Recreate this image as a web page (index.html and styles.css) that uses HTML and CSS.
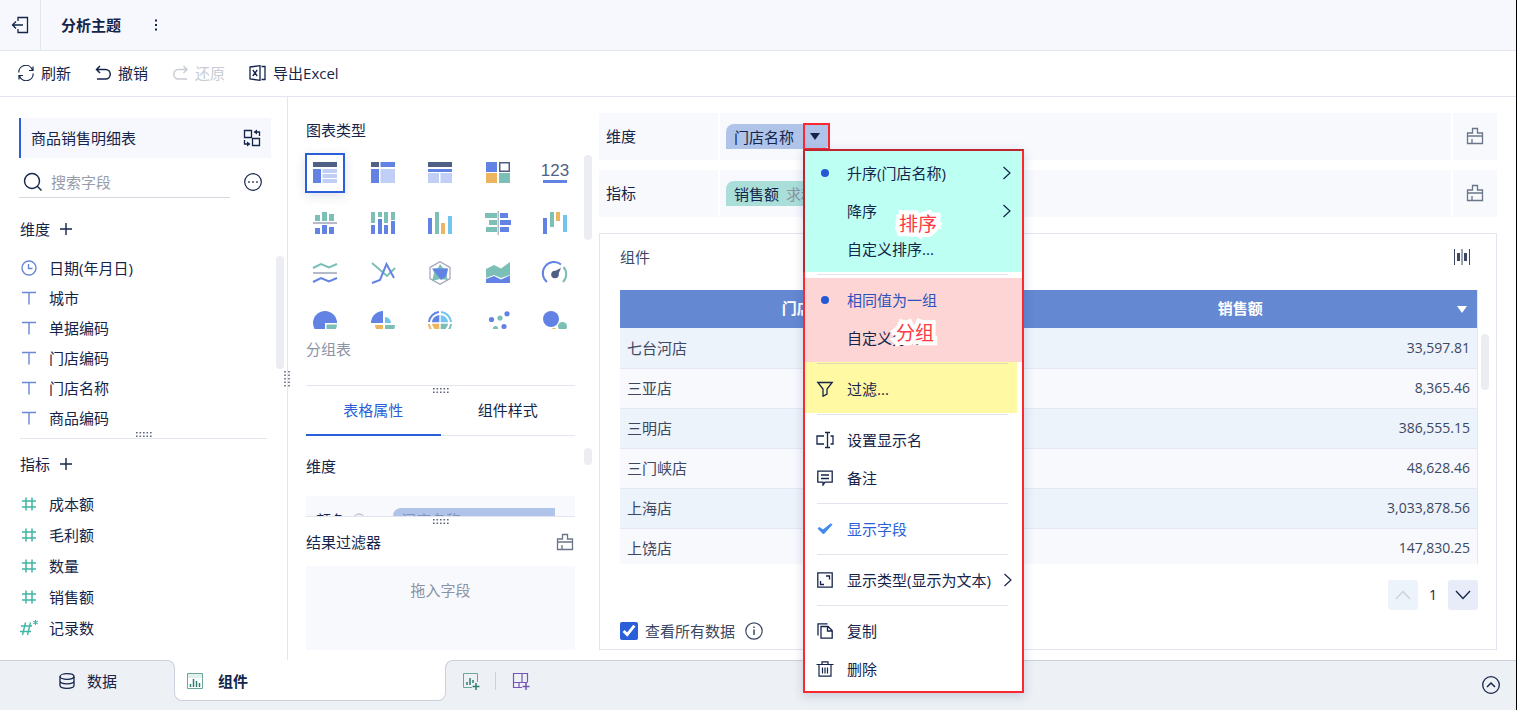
FILE: index.html
```html
<!DOCTYPE html>
<html lang="zh-CN">
<head>
<meta charset="UTF-8">
<meta name="viewport" content="width=device-width, initial-scale=1.0">
<title>分析主题</title>
<link rel="stylesheet" href="styles.css">
</head>
<body>
	<svg class="sprite" aria-hidden="true">
		<symbol id="i-text" viewBox="0 0 16 16"><path d="M1 2.5h14M8 2.5v12" stroke-width="1.4"/></symbol>
		<symbol id="i-hash" viewBox="0 0 16 16"><path d="M1 5h14M1 11h14M5 1.5v13M11 1.5v13" stroke-width="1.5"/></symbol>
		<symbol id="i-plus" viewBox="0 0 14 14"><path d="M7 1v12M1 7h12" stroke-width="1.4"/></symbol>
		<symbol id="i-right" viewBox="0 0 10 16"><path d="M1.5 2L8 8l-6.500 6" stroke-width="1.2"/></symbol>
		<symbol id="i-broom" viewBox="0 0 18 18"><path d="M1.5 6h5V1.500h5V6h5v10.500h-15zM1.500 9h15M6 12v4.500" stroke-width="1.3"/></symbol>
		<symbol id="i-dots" viewBox="0 0 16 5"><path d="M0 .8h16M0 4.200h16" stroke-width="1.6" stroke-dasharray="1.6 1.9"/></symbol>
	</svg>

	<header class="topbar">
		<button class="back" aria-label="返回">
			<svg width="18" height="18" viewBox="0 0 18 18"><path d="M7 5V1.500h9.500v15H7V13M12 9H1.500M5 5.500L1.500 9 5 12.500" stroke-width="1.3"/></svg>
		</button>
		<h1>分析主题</h1>
		<button class="more" aria-label="更多">
			<svg width="4" height="14" viewBox="0 0 4 14"><path class="fill" d="M1 1.500h2v2H1zM1 6h2v2H1zM1 10.500h2v2H1z"/></svg>
		</button>
	</header>

	<nav class="toolbar">
		<button>
			<svg width="16" height="16" viewBox="0 0 16 16"><path d="M.8 7.500A7 7 0 0 1 14.400 5M15 1.500V5.500h-4M15.200 8.500A7 7 0 0 1 1.600 11M1 14.500V10.500h4" stroke-width="1.2"/></svg>刷新
		</button>
		<button>
			<svg width="16" height="16" viewBox="0 0 16 16"><path d="M5 1L1.500 4.500 5 8M1.500 4.500H10.500a4.500 4.500 0 0 1 0 9.500H2" stroke-width="1.5"/></svg>撤销
		</button>
		<button disabled>
			<svg width="16" height="16" viewBox="0 0 16 16"><path d="M11.500 1l3.500 3.500L11.500 8M15 4.500H6.500a4.500 4.500 0 0 0 0 9.500H15" stroke-width="1.5"/></svg>还原
		</button>
		<button>
			<svg width="17" height="16" viewBox="0 0 17 16"><path d="M1 2l10-1.300v14.600L1 14zM12.500 1.500H16v13h-3.500M3.800 5l4.400 6M8.200 5l-4.400 6" stroke-width="1.3"/></svg>导出Excel
		</button>
	</nav>

	<main class="main">
		<aside class="fields">
			<div class="source">
				<span>商品销售明细表</span>
				<button aria-label="切换表">
					<svg width="18" height="18" viewBox="0 0 18 18"><path d="M1.500 1.500h7v7h-7zM9.500 9.500h7v7h-7zM16.500 7V3h-4.500M1.500 11v4H6" stroke-width="1.3"/><path class="fill" d="M10.500 3L14 .5v5zM7.500 15L4 12.500v5z"/></svg>
				</button>
			</div>
			<div class="search">
				<label class="search-box">
					<svg width="20" height="20" viewBox="0 0 20 20"><circle cx="9" cy="9" r="7.500" stroke-width="1.4"/><path d="M14.500 14.500L18.500 18.500" stroke-width="1.4"/></svg>
					<input type="text" aria-label="搜索字段" placeholder="搜索字段">
				</label>
				<button aria-label="更多选项">
					<svg width="18" height="18" viewBox="0 0 18 18"><circle cx="9" cy="9" r="8.300" stroke-width="1.2"/><path class="fill" d="M4.200 8.200h1.600v1.600H4.200zM8.200 8.200h1.600v1.600H8.200zM12.200 8.200h1.600v1.600h-1.600z"/></svg>
				</button>
			</div>

			<h2>维度 <button aria-label="添加维度"><svg width="14" height="14"><use href="#i-plus"/></svg></button></h2>
			<ul class="dims">
				<li><svg class="blue" width="16" height="16" viewBox="0 0 16 16"><circle cx="8" cy="8" r="7" stroke-width="1.4"/><path d="M7.500 4v4.500h4" stroke-width="1.4"/></svg>日期(年月日)</li>
				<li><svg class="blue" width="16" height="16"><use href="#i-text"/></svg>城市</li>
				<li><svg class="blue" width="16" height="16"><use href="#i-text"/></svg>单据编码</li>
				<li><svg class="blue" width="16" height="16"><use href="#i-text"/></svg>门店编码</li>
				<li><svg class="blue" width="16" height="16"><use href="#i-text"/></svg>门店名称</li>
				<li><svg class="blue" width="16" height="16"><use href="#i-text"/></svg>商品编码</li>
			</ul>
			<div class="splitter"><svg width="16" height="5"><use href="#i-dots"/></svg></div>
			<h2>指标 <button aria-label="添加指标"><svg width="14" height="14"><use href="#i-plus"/></svg></button></h2>
			<ul class="measures">
				<li><svg class="green" width="16" height="16"><use href="#i-hash"/></svg>成本额</li>
				<li><svg class="green" width="16" height="16"><use href="#i-hash"/></svg>毛利额</li>
				<li><svg class="green" width="16" height="16"><use href="#i-hash"/></svg>数量</li>
				<li><svg class="green" width="16" height="16"><use href="#i-hash"/></svg>销售额</li>
				<li><svg class="green" width="16" height="16" viewBox="0 0 16 16"><path d="M0 6h11M-1 11.500h11M4.500 2.500l-3 12.500M9.500 2.500l-3 12.500" stroke-width="1.4"/><path d="M14.500 0v5M12.300 1.200l4.400 2.600M16.700 1.200l-4.400 2.600" stroke-width="1.1"/></svg>记录数</li>
			</ul>
			<i class="bar bar-dims"></i>
			<svg class="grip" width="6" height="16" viewBox="0 0 6 16"><path d="M1 0v16M5 0v16" stroke-width="1.6" stroke-dasharray="1.6 1.9"/></svg>
		</aside>

		<section class="config">
			<h2>图表类型</h2>
			<div class="charts">
				<button class="active" aria-label="分组表"><svg viewBox="0 0 24 24"><path class="c-dark" d="M0 1h24v5H0z"/><path class="c-blue" d="M0 8h8v14H0z"/><path class="c-light" d="M9.500 8H24v4H9.500zM9.500 13H24v4H9.500zM9.500 18H24v4H9.500z"/></svg></button>
				<button aria-label="交叉表"><svg viewBox="0 0 24 24"><path class="c-dark" d="M0 1h8v5H0z"/><path class="c-blue" d="M9.500 1H24v5H9.500zM0 8h8v14H0z"/><path class="c-light" d="M9.500 8H24v14H9.500z"/></svg></button>
				<button aria-label="明细表"><svg viewBox="0 0 24 24"><path class="c-dark" d="M0 1h24v5H0z"/><path class="c-blue" d="M0 8h24v3H0z"/><path class="c-light" d="M0 12h11v10H0zM12.500 12H24v10H12.500z"/></svg></button>
				<button aria-label="颜色表格"><svg viewBox="0 0 24 24"><path class="c-blue" d="M0 1h11v10H0z"/><path class="c-dark" d="M13 1h11v10H13zm1.500 1.500v7h8v-7z" fill-rule="evenodd"/><path class="c-orange" d="M0 12h11v10H0z"/><path class="c-teal" d="M13 12h11v10H13z"/></svg></button>
				<button aria-label="KPI指标卡"><svg viewBox="0 0 24 24"><text x="12" y="15" text-anchor="middle">123</text><path class="c-blue" d="M0 19h24v3H0z"/></svg></button>

				<button aria-label="对比柱状图"><svg viewBox="0 0 24 24"><path class="c-teal" d="M2 4h5v6H2zM9 1h5v9H9zM16 3h5v7h-5z"/><path class="c-grey" d="M0 11h24v2H0z"/><path class="c-blue" d="M2 17h5v6H2zM9 14h5v9H9zM16 16h5v7h-5z"/></svg></button>
				<button aria-label="堆积柱状图"><svg viewBox="0 0 24 24"><path class="c-teal" d="M0 1h4v11H0zM7 1h4v5H7zM13 1h4v11h-4zM20 1h4v8h-4z"/><path class="c-blue" d="M0 14h4v9H0zM7 8h4v15H7zM13 14h4v9h-4zM20 10h4v13h-4z"/></svg></button>
				<button aria-label="分区柱形图"><svg viewBox="0 0 24 24"><path class="c-blue" d="M0 7h4v16H0z"/><path class="c-teal" d="M7 1h4v22H7z"/><path class="c-orange" d="M13 12h4v11h-4z"/><path class="c-sky" d="M20 5h4v18h-4z"/></svg></button>
				<button aria-label="对比条形图"><svg viewBox="0 0 24 24"><path class="c-teal" d="M-1 2h12v5H-1zM3 9h8v5H3zM0 16h11v5H0z"/><path class="c-grey" d="M11.500 0h1.500v24h-1.500z"/><path class="c-blue" d="M14 2h8v5h-8zM14 9h11v5H14zM14 16h9v5h-9z"/></svg></button>
				<button aria-label="瀑布图"><svg viewBox="0 0 24 24"><path class="c-blue" d="M0 7h4v16H0z"/><path class="c-teal" d="M7 1h4v15H7z"/><path class="c-orange" d="M13 1h4v9h-4z"/><path class="c-sky" d="M20 4h4v17h-4z"/></svg></button>

				<button aria-label="范围面积图"><svg viewBox="0 0 24 24"><path class="s-teal" d="M0 7l8-4 8 3.500L24 3"/><path class="c-grey" d="M0 11h24v2H0z"/><path class="s-blue" d="M0 21l8-4 8 3.500 8-3.500"/></svg></button>
				<button aria-label="折线图"><svg viewBox="0 0 24 24"><path class="s-teal" d="M1 2l15 13 8-8"/><path class="s-blue" d="M1 22l8-3L15.500 3 23 17"/></svg></button>
				<button aria-label="雷达图"><svg viewBox="0 0 24 24"><path class="s-grey" d="M12 .8l10 5.600v11.200l-10 5.600-10-5.600V6.400z"/><path class="c-teal" d="M12 3l3 4 5 1-2 5 2 6-8-1-8 2 2-8-1-4 5-1z"/><path class="c-blue" d="M4 7.500h16L18.500 15 13 19z"/></svg></button>
				<button aria-label="面积图"><svg viewBox="0 0 24 24"><path class="c-teal" d="M0 8l8-4 7 3.500L24 1v13l-9 3-7-3-8 3z"/><path class="c-blue" d="M0 18l8-3 7 3.500 9-4V22H0z"/></svg></button>
				<button aria-label="仪表盘"><svg viewBox="0 0 24 24"><path class="s-blue" d="M4 21A11 11 0 0 1 18 3.500"/><path class="s-teal" d="M20.500 6a11 11 0 0 1-.5 15"/><circle class="c-dark" cx="12" cy="13.500" r="3.800"/><path class="c-dark" d="M10 11l8-4-3.500 8z"/></svg></button>

				<button aria-label="饼图"><svg viewBox="0 0 24 24"><path class="c-blue" d="M12 12h12A12 12 0 1 0 12 24z"/><path class="c-teal" d="M13.500 13.500H24A11 11 0 0 1 13.500 24z"/></svg></button>
				<button aria-label="玫瑰图"><svg viewBox="0 0 24 24"><path class="c-blue" d="M12 0v12H0A12 12 0 0 1 12 0z"/><path class="c-sky" d="M14 6a6 6 0 0 1 6 6h-6z"/><path class="c-orange" d="M12 14v8a8 8 0 0 1-8-8z"/><path class="c-teal" d="M14 14h10a10 10 0 0 1-10 10z"/></svg></button>
				<button aria-label="多层饼图"><svg viewBox="0 0 24 24"><path class="s-blue" d="M1 11A11 11 0 0 1 11 1"/><path class="s-sky" d="M13 1a11 11 0 0 1 10 10"/><path class="s-orange" d="M1 13a11 11 0 0 0 10 10"/><path class="s-teal" d="M23 13a11 11 0 0 1-10 10"/><path class="c-blue" d="M11.300 4v7.300H4A8 8 0 0 1 11.300 4z"/><path class="c-sky" d="M12.700 4v7.300H20A8 8 0 0 0 12.700 4z"/><path class="c-orange" d="M4 12.700h7.300V20A8 8 0 0 1 4 12.700z"/><path class="c-teal" d="M20 12.700h-7.300V20a8 8 0 0 0 7.300-7.300z"/></svg></button>
				<button aria-label="散点图"><svg viewBox="0 0 24 24"><g class="c-blue"><circle cx="5.500" cy="8.500" r="2.600"/><circle cx="21" cy="2.800" r="2.600"/><circle cx="18" cy="15.500" r="2.600"/></g><g class="c-teal"><circle cx="14" cy="7" r="2.600"/><circle cx="9.500" cy="17.500" r="2.600"/></g></svg></button>
				<button aria-label="气泡图"><svg viewBox="0 0 24 24"><circle class="c-blue" cx="8" cy="8" r="8"/><circle class="c-teal" cx="19.500" cy="15.500" r="4.500"/><circle class="c-orange" cx="11" cy="20" r="3"/></svg></button>
			</div>
			<p class="chart-name">分组表</p>

			<div class="splitter below"><svg width="16" height="5"><use href="#i-dots"/></svg></div>
			<div class="tabs">
				<button class="active">表格属性</button>
				<button>组件样式</button>
			</div>
			<div class="attrs">
				<h3>维度</h3>
				<div class="attr-row">
					<span>颜色</span>
					<svg width="14" height="14" viewBox="0 0 14 14"><circle cx="7" cy="7" r="6"/></svg>
					<span class="attr-pill">门店名称</span>
				</div>
			</div>
			<div class="splitter below"><svg width="16" height="5"><use href="#i-dots"/></svg></div>
			<div class="filter-head">
				<h3>结果过滤器</h3>
				<button aria-label="清空"><svg width="18" height="18"><use href="#i-broom"/></svg></button>
			</div>
			<div class="drop">拖入字段</div>
			<i class="bar bar-charts"></i>
			<i class="bar bar-attrs"></i>
		</section>

		<section class="canvas">
			<div class="shelf">
				<div class="shelf-name">维度</div>
				<div class="shelf-body">
					<div class="pill">
						<span>门店名称</span>
						<button class="arrow" aria-label="打开菜单"><svg width="10" height="7" viewBox="0 0 10 7"><path class="fill" d="M0 0h10L5 7z"/></svg></button>
						<div class="menu">
							<div class="group sort">
								<button><i class="dot"></i>升序(门店名称)<svg class="next" width="10" height="16"><use href="#i-right"/></svg></button>
								<button><i></i>降序<svg class="next" width="10" height="16"><use href="#i-right"/></svg></button>
								<button><i></i>自定义排序...</button>
								<b class="note note-sort">排序</b>
							</div>
							<hr>
							<div class="group same">
								<button class="on"><i class="dot"></i>相同值为一组</button>
								<button><i></i>自定义分组...</button>
								<b class="note note-same">分组</b>
							</div>
							<div class="group filter">
								<hr>
								<button><svg width="16" height="16" viewBox="0 0 16 16"><path d="M.8 1.500h14.400L10 8v5l-4 2.200V8z" stroke-width="1.3"/></svg>过滤...</button>
							</div>
							<hr>
							<div class="group">
								<button><svg width="18" height="18" viewBox="0 0 18 18"><path d="M8 5H1v8h7M14.500 5H17v8h-2.500M9 1.500h5M9 16.500h5M11.500 1.500v15" stroke-width="1.3"/></svg>设置显示名</button>
								<button><svg width="16" height="16" viewBox="0 0 16 16"><path d="M.8 1.200h14.400v11H8L6 15v-2.800H.8zM4 5h8M4 8.500h8" stroke-width="1.3"/></svg>备注</button>
							</div>
							<hr>
							<div class="group">
								<button class="on"><svg width="16" height="12" viewBox="0 0 16 12"><path class="tick" d="M1 5.500l1.500-1L6 7l7.500-6 1.500.500L6.500 11z"/></svg>显示字段</button>
							</div>
							<hr>
							<div class="group">
								<button><svg width="16" height="16" viewBox="0 0 16 16"><path d="M.8.8h14.400v14.400H.8zM9 4h3.500v3.500M3.500 9v3.500H7" stroke-width="1.3"/></svg>显示类型(显示为文本)<svg class="next" width="10" height="16"><use href="#i-right"/></svg></button>
							</div>
							<hr>
							<div class="group">
								<button><svg width="16" height="16" viewBox="0 0 16 16"><path d="M1 12.500V.8h9.500M4 3.500h7l4.200 4v7.700H4zM10.500 3.500V8h4.700" stroke-width="1.3"/></svg>复制</button>
								<button><svg width="18" height="16" viewBox="0 0 18 16"><path d="M.5 3.500h17M6 3.500V.8h6v2.700M3 3.500v11.700h12V3.500M6.500 6.500v6M9 6.500v6M11.500 6.500v6" stroke-width="1.2"/></svg>删除</button>
							</div>
						</div>
					</div>
				</div>
				<div class="shelf-clear"><button aria-label="清空维度"><svg width="18" height="18"><use href="#i-broom"/></svg></button></div>
			</div>
			<div class="shelf">
				<div class="shelf-name">指标</div>
				<div class="shelf-body">
					<div class="pill measure"><span>销售额</span><small>求和</small></div>
				</div>
				<div class="shelf-clear"><button aria-label="清空指标"><svg width="18" height="18"><use href="#i-broom"/></svg></button></div>
			</div>

			<div class="card">
				<div class="card-head">
					<h3>组件</h3>
					<button aria-label="列宽"><svg width="16" height="16" viewBox="0 0 16 16"><path class="fill" d="M0 0h1v16H0zM3 4h3v8H3zM7.500 0h1v16h-1zM10 4h3v8h-3zM15 0h1v16h-1z"/></svg></button>
				</div>
				<div class="table-area">
					<div class="table-box">
						<table>
							<thead>
								<tr><th class="store">门店名称</th><th>销售额<svg width="10" height="7" viewBox="0 0 10 7"><path class="fill" d="M0 0h10L5 7z"/></svg></th></tr>
							</thead>
							<tbody>
								<tr><td>七台河店</td><td>33,597.81</td></tr>
								<tr><td>三亚店</td><td>8,365.46</td></tr>
								<tr><td>三明店</td><td>386,555.15</td></tr>
								<tr><td>三门峡店</td><td>48,628.46</td></tr>
								<tr><td>上海店</td><td>3,033,878.56</td></tr>
								<tr><td>上饶店</td><td>147,830.25</td></tr>
							</tbody>
						</table>
					</div>
					<i class="bar bar-table"></i>
				</div>
				<div class="pager">
					<button disabled aria-label="上一页"><svg width="16" height="10" viewBox="0 0 16 10"><path d="M1 9l7-7.500L15 9" stroke-width="1.3"/></svg></button>
					<span>1</span>
					<button aria-label="下一页"><svg width="16" height="10" viewBox="0 0 16 10"><path d="M1 1l7 7.500L15 1" stroke-width="1.3"/></svg></button>
				</div>
				<div class="all-data">
					<input type="checkbox" id="all_data" checked>
					<label for="all_data">查看所有数据</label>
					<svg width="18" height="18" viewBox="0 0 18 18"><circle cx="9" cy="9" r="8.200" stroke-width="1.2"/><path d="M9 7.500V13M9 4.500V6" stroke-width="1.5"/></svg>
				</div>
			</div>
		</section>
	</main>

	<footer>
		<div class="foot-data">
			<a href="#data"><svg width="16" height="16" viewBox="0 0 16 16"><ellipse cx="8" cy="3.500" rx="7" ry="2.800" stroke-width="1.3"/><path d="M1 3.500v9C1 14 4 15.300 8 15.300s7-1.300 7-2.800v-9M1 8c0 1.500 3 2.800 7 2.800S15 9.500 15 8" stroke-width="1.3"/></svg>数据</a>
		</div>
		<div class="foot-active">
			<a href="#widget"><svg width="16" height="16" viewBox="0 0 16 16"><path class="tint" d="M0 0h16v5H0z"/><path class="box" d="M.5.5h15v15H.5z"/><path class="bars" d="M3.500 14v-3M6.500 14V6M9.500 14V8M12.500 14v-4"/></svg>组件</a>
		</div>
		<div class="foot-rest">
			<button aria-label="添加组件"><svg width="18" height="18" viewBox="0 0 18 18"><path class="box" d="M10 15.500H1.500V1.500h14V10"/><path class="bars" d="M5 13v-3M8 13V6M11 11V8M14 11v7M10.500 14.500h7"/></svg></button>
			<button class="dash" aria-label="添加仪表板"><svg width="18" height="18" viewBox="0 0 18 18"><path d="M10 15.500H1.500V1.500h14V10M1.500 10.500h14M7 10.500v5M10 1.500v9" stroke-width="1.2"/><path d="M14 11v7M10.500 14.500h7" stroke-width="1.5"/></svg></button>
			<button class="fold" aria-label="展开"><svg width="18" height="18" viewBox="0 0 18 18"><circle cx="9" cy="9" r="8.300" stroke-width="1.3"/><path d="M5 11l4-4 4 4" stroke-width="1.5"/></svg></button>
		</div>
	</footer>
</body>
</html>
```
FILE: styles.css
```css
* {
    box-sizing: border-box;
}

body {
    margin: 0;
    height: 100vh;
    display: flex;
    flex-direction: column;
    overflow: hidden;
    border-right: 1px solid #000;
    background-color: #fff;
    color: #14244a;
    font-family: "Open Sans", "Noto Sans CJK SC", sans-serif;
    font-size: 15px;
    line-height: 20px;
}

h1, h2, h3, p, ul {
    margin: 0;
    padding: 0;
    font-size: 15px;
    font-weight: normal;
}

ul {
    list-style: none;
}

button {
    display: flex;
    align-items: center;
    padding: 0;
    border: none;
    background: none;
    color: inherit;
    font: inherit;
    cursor: pointer;
}

a {
    color: inherit;
    text-decoration: none;
}

svg {
    display: block;
    flex: none;
    fill: none;
    stroke: currentColor;
}

.fill {
    fill: currentColor;
    stroke: none;
}

.sprite {
    position: absolute;
    width: 0;
    height: 0;
}

.blue {
    color: #6b87d6;
}

.green {
    color: #3fb5a3;
}

/* scroll thumbs */
.bar {
    position: absolute;
    width: 8px;
    border-radius: 4px;
    background-color: #ecedf2;
}

/* top */
.topbar {
    display: flex;
    align-items: center;
    height: 51px;
    background-color: #f7f8fd;
    border-bottom: 1px solid #e3e5ef;
}

.back {
    justify-content: center;
    width: 41px;
    height: 50px;
    border-right: 1px solid #e3e5ef;
}

.topbar h1 {
    font-weight: bold;
    margin: 0 33px 0 20px;
}

.toolbar {
    display: flex;
    align-items: center;
    gap: 24px;
    height: 46px;
    padding: 0 0 2px 18px;
    border-bottom: 1px solid #e3e5ef;
}

.toolbar button {
    gap: 7px;
}

.toolbar button:disabled {
    color: #c8ccd4;
}

.main {
    display: flex;
    flex: 1;
    min-height: 0;
}

/* left */
.fields {
    position: relative;
    width: 288px;
    padding: 21px 16px 0 19px;
    border-right: 1px solid #e3e5ef;
}

.source {
    display: flex;
    align-items: center;
    justify-content: space-between;
    height: 40px;
    padding: 0 10px;
    border-left: 2px solid #2b5fd9;
    background-color: #f7f8fd;
}

.search {
    display: flex;
    align-items: center;
    justify-content: space-between;
    height: 48px;
    padding-right: 9px;
}

.search-box {
    display: flex;
    align-items: center;
    gap: 8px;
    width: 211px;
    height: 31px;
    padding-left: 4px;
    border-bottom: 1px solid #d5d8e0;
}

.search-box input {
    width: 160px;
    padding: 0;
    border: none;
    outline: none;
    background: none;
    font: inherit;
}

.search-box input::placeholder {
    color: #959cab;
}

.fields h2 {
    display: flex;
    align-items: center;
    gap: 9px;
    height: 20px;
    margin: 13px 0 14px 1px;
}

.fields li {
    display: flex;
    align-items: center;
    gap: 12px;
    padding-left: 2px;
}

.fields li svg {
    overflow: visible;
}

.dims li {
    height: 30px;
}

.measures li {
    height: 31px;
}

.splitter {
    display: flex;
    justify-content: center;
    height: 7px;
    border-bottom: 1px solid #e3e5ef;
    color: #5c6780;
}

.splitter.below {
    align-items: flex-end;
    height: 8px;
    border-top: 1px solid #e3e5ef;
    border-bottom: none;
}

.fields .splitter {
    width: 247px;
    margin: -1px 0 15px 1px;
}

.bar-dims {
    top: 159px;
    right: 3px;
    height: 113px;
}

.grip {
    position: absolute;
    right: -3px;
    top: 274px;
    color: #5c6780;
}

/* middle */
.config {
    position: relative;
    display: flex;
    flex-direction: column;
    width: 311px;
    padding: 23px 24px 10px 18px;
}

.charts {
    display: grid;
    grid-template-columns: repeat(5, 40px);
    grid-auto-rows: 40px;
    justify-content: space-between;
    row-gap: 10px;
    height: 176px;
    margin: 13px 0 10px -1px;
    clip-path: inset(-10px -10px 0 -10px);
}

.charts button {
    justify-content: center;
}

.charts button.active {
    border: 2px solid #2b5fd9;
    box-shadow: 0 3px 10px rgba(40, 60, 110, 0.15);
}

.charts svg {
    width: 24px;
    height: 24px;
    overflow: visible;
    stroke: none;
}

.charts text {
    font-family: "Liberation Sans Narrow", "Liberation Sans", sans-serif;
    font-size: 17px;
    fill: #505f84;
    stroke: none;
}

.c-dark { fill: #505f84; }
.c-blue { fill: #6283e4; }
.c-light { fill: #c1cef5; }
.c-orange { fill: #eeb560; }
.c-teal { fill: #7bbfb7; }
.c-sky { fill: #73c5ef; }
.c-grey { fill: #b5bac8; }
.s-blue { stroke: #6283e4; stroke-width: 2; }
.s-teal { stroke: #7bbfb7; stroke-width: 2; }
.s-sky { stroke: #73c5ef; stroke-width: 2; }
.s-orange { stroke: #eeb560; stroke-width: 2; }
.s-grey { stroke: #9da4b5; stroke-width: 1.2; }

.chart-name {
    margin-bottom: 26px;
    color: #8b93a5;
}

.tabs {
    display: flex;
    height: 43px;
    border-bottom: 1px solid #e3e5ef;
}

.tabs button {
    flex: 1;
    justify-content: center;
    height: 43px;
    padding-bottom: 9px;
}

.tabs .active {
    border-bottom: 2px solid #2b5fd9;
    padding-bottom: 7px;
    color: #2b5fd9;
}

.attrs {
    height: 80px;
    padding-top: 20px;
    overflow: hidden;
}

.attr-row {
    display: flex;
    align-items: center;
    gap: 6px;
    height: 48px;
    margin-top: 20px;
    padding: 0 20px 0 10px;
    background-color: #f7f9fd;
}

.attr-row svg {
    color: #a8aebb;
}

.attr-pill {
    flex: 1;
    height: 25px;
    margin-left: 21px;
    padding: 2px 8px;
    border-radius: 8px 0 8px 0;
    background-color: #b0c4e9;
    color: #8294b8;
}

.filter-head {
    display: flex;
    align-items: center;
    justify-content: space-between;
    height: 36px;
    margin-bottom: 6px;
}

.filter-head button,
.shelf-clear button {
    color: #6b7588;
}

.filter-head button {
    margin-right: 1px;
}

.drop {
    flex: 1;
    padding-top: 14px;
    background-color: #f7f9fd;
    color: #8b93a5;
    text-align: center;
}

.bar-charts {
    top: 58px;
    right: 7px;
    height: 85px;
}

.bar-attrs {
    top: 351px;
    right: 7px;
    height: 17px;
}

/* right */
.canvas {
    flex: 1;
    min-width: 0;
    display: flex;
    flex-direction: column;
    padding: 16px 19px 10px 0;
}

.shelf {
    display: flex;
    gap: 2px;
    height: 47px;
    margin-bottom: 10px;
}

.shelf > div {
    display: flex;
    align-items: center;
    background-color: #f7f9fd;
}

.shelf .shelf-name {
    width: 119px;
    padding: 0 0 2px 7px;
}

.shelf .shelf-body {
    flex: 1;
    padding-left: 6px;
}

.shelf .shelf-clear {
    width: 44px;
    padding-bottom: 2px;
    justify-content: center;
}

.pill {
    position: relative;
    display: flex;
    align-items: center;
    height: 25px;
    padding-left: 8px;
    border-radius: 8px 0 8px 0;
    background-color: #b0c4e9;
}

.pill.measure {
    padding-right: 8px;
    background-color: #aadfd9;
}

.pill small {
    margin-left: 7px;
    font-size: 15px;
    color: #8b93a5;
}

.arrow {
    justify-content: center;
    width: 27px;
    height: 27px;
    margin-left: 9px;
    border: 2px solid #fb2830;
    padding-right: 3px;
}

/* dropdown menu */
.menu {
    position: absolute;
    z-index: 10;
    top: 100%;
    left: 77px;
    width: 221px;
    padding-bottom: 3px;
    border: 2px solid #fb2830;
    border-top-color: #bd2631;
    background-color: #fff;
    box-shadow: 0 3px 10px rgba(40, 60, 110, 0.2);
}

.menu button {
    gap: 12px;
    width: 100%;
    height: 38px;
    padding: 0 10px 1px;
    white-space: nowrap;
}

.menu button > :first-child {
    width: 20px;
}

.menu .on {
    color: #2b5fd9;
}

.menu .next {
    margin-left: auto;
}

.menu .dot::before {
    content: "";
    display: block;
    width: 8px;
    height: 8px;
    margin: 0 auto;
    border-radius: 50%;
    background-color: #2459d6;
}

.tick {
    fill: #3f8bee;
    stroke: #3f8bee;
}

.menu hr {
    height: 1px;
    margin: 6px 14px 6px 12px;
    border: none;
    background-color: #e1e4ec;
}

.group {
    position: relative;
}

.menu .sort {
    margin-left: -2px;
    padding: 3px 0 4px;
    border-left: 2px solid #bd2631;
    background-color: #bdfff3;
}

.menu .sort + hr {
    margin-top: 2px;
    margin-bottom: 3px;
}

.menu .same {
    padding: 3px 0 5px;
    background-color: #fed5d5;
}

.menu .same .on {
    color: #2b52bd;
}

.menu .filter {
    margin-right: 5px;
    padding: 1px 0 5px;
    background-color: #fff9a3;
}

.menu .filter hr {
    margin: 0 9px 6px 12px;
    background-color: #dcd8b4;
}

.menu .filter + hr {
    margin-top: 1px;
}

.note {
    position: absolute;
    color: #fb3a42;
    font-size: 19px;
    line-height: 24px;
    font-weight: normal;
    -webkit-text-stroke: 8px #fff;
    stroke-linejoin: round;
    paint-order: stroke fill;
}

.note-sort {
    top: 61px;
    left: 94px;
}

.note-same {
    top: 43px;
    left: 91px;
}

/* table card */
.card {
    flex: 1;
    display: flex;
    flex-direction: column;
    margin-top: 6px;
    padding: 0 18px 8px 20px;
    border: 1px solid #e3e5ef;
}

.card-head {
    display: flex;
    align-items: center;
    justify-content: space-between;
    height: 46px;
    margin-bottom: 10px;
    padding-right: 8px;
}

.card-head button,
.card-head h3 {
    color: #3a4864;
}

.table-area {
    position: relative;
}

.table-box {
    height: 274px;
    overflow: hidden;
    border-right: 1px solid #e3e8f3;
}

table {
    width: 100%;
    border-collapse: collapse;
    table-layout: fixed;
    color: #3d4862;
}

.store {
    width: 45%;
}

th {
    position: relative;
    height: 38px;
    padding: 0 2px 2px 0;
    background-color: #6488d2;
    color: #fff;
    font-weight: bold;
}

th svg {
    position: absolute;
    right: 10px;
    top: 16px;
}

td {
    height: 40px;
    padding: 0 7px;
    border-bottom: 1px solid #e3e8f3;
    background-color: #f7f9fd;
}

td + td {
    text-align: right;
    font-size: 14px;
}

tbody tr:nth-child(odd) td {
    background-color: #edf3fb;
}

.bar-table {
    top: 44px;
    right: -11px;
    height: 56px;
}

.pager {
    display: flex;
    justify-content: flex-end;
    align-items: center;
    margin-top: 16px;
}

.pager button {
    justify-content: center;
    width: 30px;
    height: 30px;
    border-radius: 3px;
    background-color: #e7ecf8;
}

.pager button:disabled {
    background-color: #edf3fb;
    color: #cbd0d9;
}

.pager span {
    width: 30px;
    text-align: center;
    font-size: 14px;
}

.all-data {
    display: flex;
    align-items: center;
    margin-top: auto;
    color: #3a4864;
}

.all-data input {
    width: 18px;
    height: 18px;
    margin: 0 7px 0 0;
    accent-color: #2b5fd9;
}

.all-data svg {
    margin-left: 10px;
}

/* bottom tabs */
footer {
    display: flex;
    height: 50px;
    background: linear-gradient(#fff 20px, #edf0f5 20px);
}

footer a {
    display: flex;
    align-items: center;
}

.foot-data,
.foot-rest {
    height: 31px;
    padding-top: 10px;
    border-top: 1px solid #cbd0dd;
    background-color: #edf0f5;
}

.foot-data {
    width: 175px;
    padding-left: 59px;
    border-right: 1px solid #cbd0dd;
    border-radius: 0 8px 0 0;
}

.foot-data a {
    gap: 12px;
}

.foot-active {
    width: 272px;
    height: 33px;
    margin: 8px 0 0 -1px;
    padding: 3px 0 0 12px;
    border: 1px solid #cbd0dd;
    border-top: none;
    border-radius: 0 0 8px 8px;
    background-color: #fff;
    font-weight: bold;
}

.foot-active a {
    gap: 15px;
}

.tint {
    fill: #e0f1ee;
    stroke: none;
}

.box {
    stroke: #6ba59c;
}

.bars {
    stroke: #2e7d74;
    stroke-width: 1.5;
}

.foot-rest {
    display: flex;
    align-items: center;
    flex: 1;
    margin-left: -1px;
    padding-left: 16px;
    border-left: 1px solid #cbd0dd;
    border-radius: 8px 0 0 0;
}

.dash {
    margin-left: 15px;
    padding-left: 16px;
    border-left: 1px solid #cbd0dd;
    color: #7655b8;
}

.fold {
    margin: 8px 16px 0 auto;
}
```
